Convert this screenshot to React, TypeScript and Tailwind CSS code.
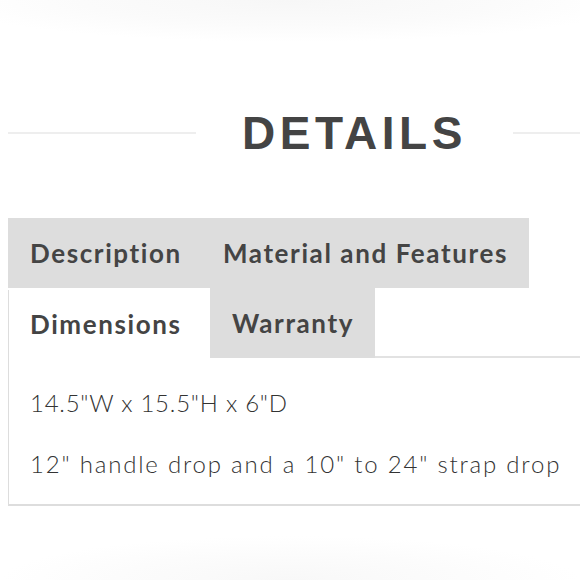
export default function App() {
  const tabFont = { fontFamily: "Lato, 'Open Sans', sans-serif" };
  return (
    <div className="w-[580px] h-[580px] overflow-hidden bg-white flex flex-col" style={tabFont}>
      {/* faint shadow from the block above */}
      <div className="h-[42px] shrink-0 bg-[radial-gradient(ellipse_60%_100%_at_50%_0%,#f7f7f7,#fbfbfb_60%,#ffffff_100%)]" />

      {/* heading */}
      <div className="mt-[56px] h-[70px] shrink-0 flex items-center pl-[8px]">
        <div className="w-[188px] h-[2px] bg-[#eeeeee]" />
        <h2
          className="ml-[46px] text-[46px] leading-none font-bold tracking-[4.5px] text-[#444444]"
          style={{ fontFamily: "'Liberation Sans', Arial, sans-serif" }}
        >
          DETAILS
        </h2>
        <div className="ml-[46px] flex-1 h-[2px] bg-[#eeeeee]" />
      </div>

      {/* tabs */}
      <div className="mt-[50px] ml-[8px] w-[640px] text-[26px] font-bold tracking-[1.6px] text-[#444444]">
        <div className="flex h-[70px]">
          <div className="w-[193px] bg-[#dddddd] pl-[22px] flex items-center">Description</div>
          <div className="w-[328px] bg-[#dddddd] pl-[22px] flex items-center">Material and Features</div>
        </div>
        <div className="flex h-[70px]">
          <div className="w-[202px] mt-[2px] bg-white border-l-[1.5px] border-[#dddddd] pl-[21px] flex items-center">
            Dimensions
          </div>
          <div className="w-[165px] bg-[#dddddd] pl-[22px] flex items-center">Warranty</div>
          <div className="flex-1 border-b-2 border-[#e2e2e2]" />
        </div>

        {/* panel */}
        <div className="h-[148px] border-l-[1.5px] border-b-2 border-[#dddddd] pl-[21px] pt-[27px] text-[24px] font-light text-[#333333] leading-[36px]">
          <p className="tracking-[0.75px]">14.5"W x 15.5"H x 6"D</p>
          <p className="mt-[25px] tracking-[1.8px]">12" handle drop and a 10" to 24" strap drop</p>
        </div>
      </div>

      {/* faint shadow from the block below */}
      <div className="mt-auto h-[44px] shrink-0 bg-[radial-gradient(ellipse_50%_100%_at_50%_100%,#f8f8f8,#fcfcfc_60%,#ffffff_100%)]" />
    </div>
  );
}
